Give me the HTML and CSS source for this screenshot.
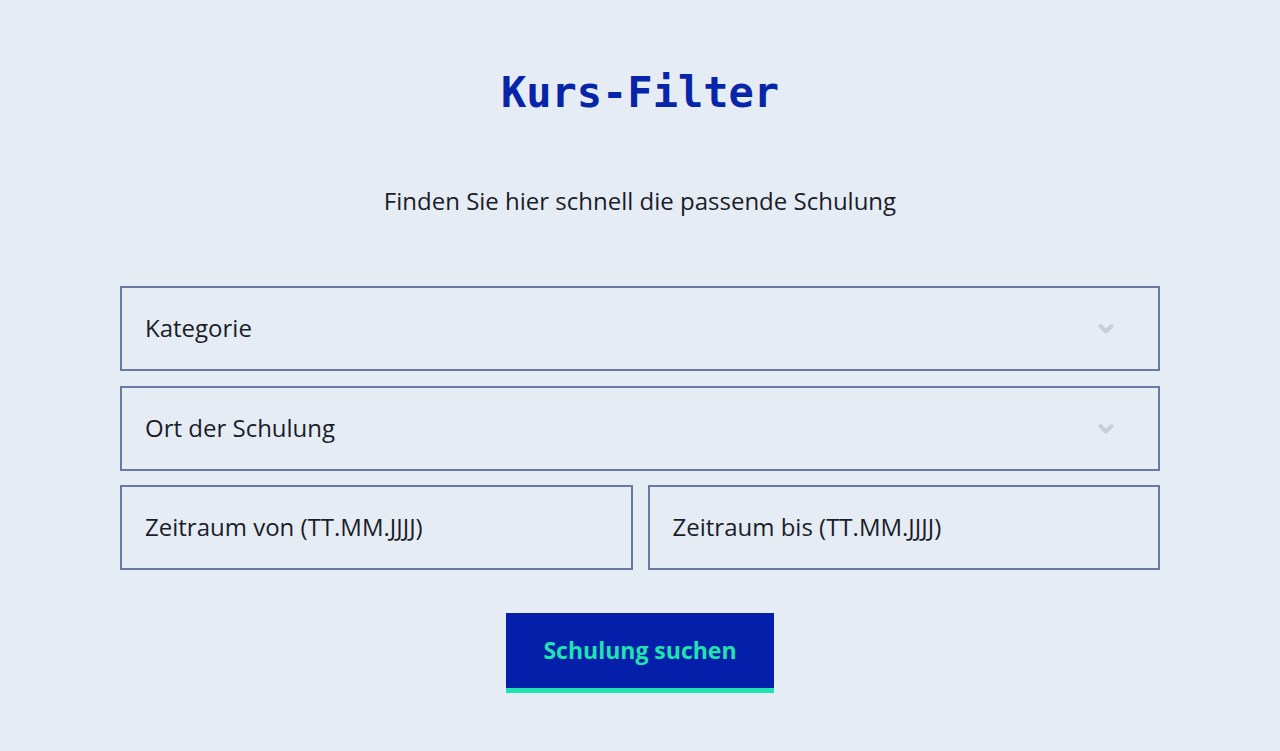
FILE: index.html
```html
<!DOCTYPE html>
<html lang="de">
<head>
<meta charset="utf-8">
<title>Kurs-Filter</title>
<link rel="stylesheet" href="styles.css">
</head>
<body>
<main class="page">
  <h1 class="title">Kurs-Filter</h1>
  <p class="subtitle">Finden Sie hier schnell die passende Schulung</p>
  <form class="filter">
    <div class="field select">
      <span class="label">Kategorie</span>
      <svg class="chev" viewBox="0 0 16 12" width="16" height="12"><path d="M2.5 3 L8 8.5 L13.5 3" fill="none" stroke="#c9ced8" stroke-width="4" stroke-linecap="round" stroke-linejoin="round"/></svg>
    </div>
    <div class="field select">
      <span class="label">Ort der Schulung</span>
      <svg class="chev" viewBox="0 0 16 12" width="16" height="12"><path d="M2.5 3 L8 8.5 L13.5 3" fill="none" stroke="#c9ced8" stroke-width="4" stroke-linecap="round" stroke-linejoin="round"/></svg>
    </div>
    <div class="row">
      <div class="field"><span class="label">Zeitraum von (TT.MM.JJJJ)</span></div>
      <div class="field"><span class="label">Zeitraum bis (TT.MM.JJJJ)</span></div>
    </div>
    <div class="actions">
      <button type="button" class="btn">Schulung suchen</button>
    </div>
  </form>
</main>
</body>
</html>
```

FILE: styles.css
```css
html, body {
  margin: 0;
  padding: 0;
  background: #e6ecf4;
}
body {
  font-family: "Open Sans", "Noto Sans", sans-serif;
  color: #1b1d2a;
}
.page {
  width: 1040px;
  margin: 0 auto;
  padding-top: 67px;
}
.title {
  margin: 0;
  text-align: center;
  font-family: "DejaVu Sans Mono", "Liberation Mono", monospace;
  font-weight: bold;
  font-size: 42px;
  line-height: 52px;
  color: #0725a8;
  letter-spacing: 0;
}
.subtitle {
  margin: 62px 0 0;
  text-align: center;
  font-size: 24px;
  line-height: 40px;
}
.filter {
  margin-top: 65px;
  display: flex;
  flex-direction: column;
  gap: 15px;
}
.field {
  box-sizing: border-box;
  height: 85px;
  border: 2px solid #6b78a4;
  display: flex;
  align-items: center;
  justify-content: space-between;
  padding: 0 44px 0 23px;
  font-size: 24px;
}
.label { line-height: 1; padding-bottom: 2px; }
.chev { display: block; }
.row {
  display: grid;
  grid-template-columns: 1fr 1fr;
  gap: 15px;
  margin-top: -1px;
}
.actions {
  display: flex;
  justify-content: center;
  margin-top: 28px;
}
.btn {
  width: 268px;
  height: 80px;
  border: 0;
  border-bottom: 5px solid #1fe3b0;
  background: #0420ab;
  color: #20e3b0;
  font-family: "Open Sans", "Noto Sans", sans-serif;
  font-weight: bold;
  font-size: 23px;
  padding: 0 0 2px;
  cursor: pointer;
}
```
